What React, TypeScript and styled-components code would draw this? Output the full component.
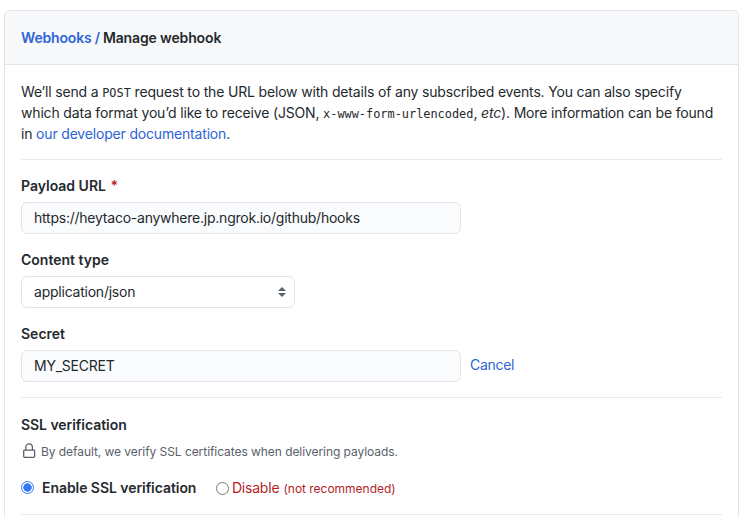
import React from "react";
import styled, { createGlobalStyle } from "styled-components";

const GlobalStyle = createGlobalStyle`
  *, *::before, *::after { box-sizing: border-box; }
  body {
    margin: 0;
    background: #fff;
    color: #24292e;
    font: 400 14px/21px Inter, "Liberation Sans", sans-serif;
  }
`;

const Page = styled.main`
  height: 100vh;
  padding: 10px 0 0 4px;
`;

const Box = styled.section`
  width: 735px;
  height: 100%;
  border: 1px solid #e1e4e8;
  border-bottom: 0;
  border-radius: 6px 6px 0 0;
  background: #fff;
`;

const BoxHeader = styled.header`
  height: 54px;
  padding: 16px;
  border-bottom: 1px solid #e1e4e8;
  border-radius: 5px 5px 0 0;
  background: #f6f8fa;
`;

const Title = styled.h2`
  display: flex;
  gap: 3px;
  margin: 0;
  font-size: 14px;
  line-height: 21px;
  font-weight: 600;
  letter-spacing: -0.14px;
`;

const BoxBody = styled.div`
  padding: 16px 16px 0;
`;

const Link = styled.a<{ $tracking?: number }>`
  color: #2e64d6;
  letter-spacing: ${(p) => p.$tracking ?? -0.18}px;
  text-decoration: none;
`;

const Intro = styled.p`
  margin: 0;
  white-space: nowrap;
  letter-spacing: -0.17px;
`;

const Code = styled.code`
  font: 11.9px/1 "DejaVu Sans Mono", monospace;
  letter-spacing: 0;
`;

const Divider = styled.hr`
  height: 1px;
  margin: 15px 0 0;
  border: 0;
  background: #e8eaed;
`;

const Field = styled.div`
  display: flex;
  flex-direction: column;
  align-items: flex-start;
  gap: 6px;
  margin-top: 15px;
`;

const Label = styled.label`
  font-weight: 600;
  line-height: 21px;
`;

const Required = styled.span`
  margin-left: 1px;
  color: #b5222f;
`;

const ControlRow = styled.div`
  display: flex;
  align-items: center;
  gap: 9px;
`;

const CancelLink = styled(Link)`
  padding-bottom: 3px;
`;

const TextInput = styled.input`
  display: block;
  width: 440px;
  height: 32px;
  padding: 0 12px 2px;
  border: 1px solid #e1e4e8;
  border-radius: 6px;
  outline: 0;
  background: #fafbfc;
  color: #24292e;
  font: inherit;
  letter-spacing: -0.235px;
`;

const SelectBox = styled.button`
  display: flex;
  align-items: center;
  justify-content: space-between;
  width: 274px;
  height: 32px;
  padding: 0 8px 0 12px;
  border: 1px solid #e1e4e8;
  border-radius: 6px;
  background: #fff;
  color: #24292e;
  font: inherit;
  letter-spacing: -0.23px;

  span { padding-bottom: 2px; }
`;

const SectionTitle = styled.h3`
  margin: 16px 0 0;
  font-size: 14px;
  line-height: 21px;
  font-weight: 600;
  letter-spacing: -0.05px;
`;

const Note = styled.p`
  display: flex;
  align-items: center;
  gap: 4px;
  margin: 8px 0 0;
  color: #586069;
  font-size: 12px;
  line-height: 18px;
  letter-spacing: -0.06px;

  svg { margin-top: -2px; }
`;

const Options = styled.div`
  display: flex;
  align-items: center;
  gap: 20px;
  margin-top: 16px;
`;

const Option = styled.label<{ $danger?: boolean }>`
  display: flex;
  align-items: center;
  gap: ${(p) => (p.$danger ? 2.5 : 8)}px;
  color: ${(p) => (p.$danger ? "#b31d28" : "#24292e")};
  font-weight: ${(p) => (p.$danger ? 400 : 600)};
  line-height: 20px;
  letter-spacing: ${(p) => (p.$danger ? -0.2 : -0.06)}px;

  small {
    margin-left: 1.6px;
    padding-top: 2px;
    font-size: 12px;
    letter-spacing: -0.02px;
  }
`;

const Radio = styled.input`
  appearance: none;
  flex: none;
  width: 13px;
  height: 13px;
  margin: ${(p) => (p.defaultChecked ? -2 : 0)}px 0 0;
  border: 1px solid #767676;
  border-radius: 50%;
  background: #fff;

  &:checked {
    border-color: #3478f6;
    background: radial-gradient(circle, #3478f6 0 3.9px, #fff 4.5px);
  }
`;

function LockIcon() {
  return (
    <svg width="16" height="16" viewBox="0 0 16 16" fill="none" stroke="currentColor" strokeWidth="1.3" aria-hidden="true">
      <rect x="2.7" y="7.2" width="10.9" height="7.2" rx="0.8" />
      <path d="M4.8 7V4.2a3.3 3.3 0 0 1 6.6 0V7" />
    </svg>
  );
}

function SortIcon() {
  return (
    <svg width="8" height="10" viewBox="0 0 8 10" fill="#586069" aria-hidden="true">
      <path d="M4 0 8 4H0zM4 10 0 6h8z" />
    </svg>
  );
}

export default function App() {
  return (
    <Page>
      <GlobalStyle />
      <Box>
        <BoxHeader>
          <Title>
            <Link href="#">Webhooks /</Link>
            <span>Manage webhook</span>
          </Title>
        </BoxHeader>
        <BoxBody>
          <Intro>
            We’ll send a <Code>POST</Code> request to the URL below with details of any subscribed
            events. You can also specify
            <br />
            which data format you’d like to receive (JSON, <Code>x-www-form-urlencoded</Code>,{" "}
            <em>etc</em>). More information can be found
            <br />
            in <Link href="#">our developer documentation</Link>.
          </Intro>
          <Divider />
          <Field>
            <Label htmlFor="url">
              Payload URL <Required>*</Required>
            </Label>
            <TextInput
              id="url"
              readOnly
              value="https://heytaco-anywhere.jp.ngrok.io/github/hooks"
            />
          </Field>
          <Field>
            <Label>Content type</Label>
            <SelectBox type="button">
              <span>application/json</span>
              <SortIcon />
            </SelectBox>
          </Field>
          <Field>
            <Label htmlFor="secret">Secret</Label>
            <ControlRow>
              <TextInput id="secret" readOnly value="MY_SECRET" />
              <CancelLink href="#" $tracking={-0.28}>Cancel</CancelLink>
            </ControlRow>
          </Field>
          <Divider />
          <SectionTitle>SSL verification</SectionTitle>
          <Note>
            <LockIcon />
            By default, we verify SSL certificates when delivering payloads.
          </Note>
          <Options>
            <Option>
              <Radio type="radio" name="ssl" defaultChecked />
              Enable SSL verification
            </Option>
            <Option $danger>
              <Radio type="radio" name="ssl" />
              Disable <small>(not recommended)</small>
            </Option>
          </Options>
          <Divider />
        </BoxBody>
      </Box>
    </Page>
  );
}
